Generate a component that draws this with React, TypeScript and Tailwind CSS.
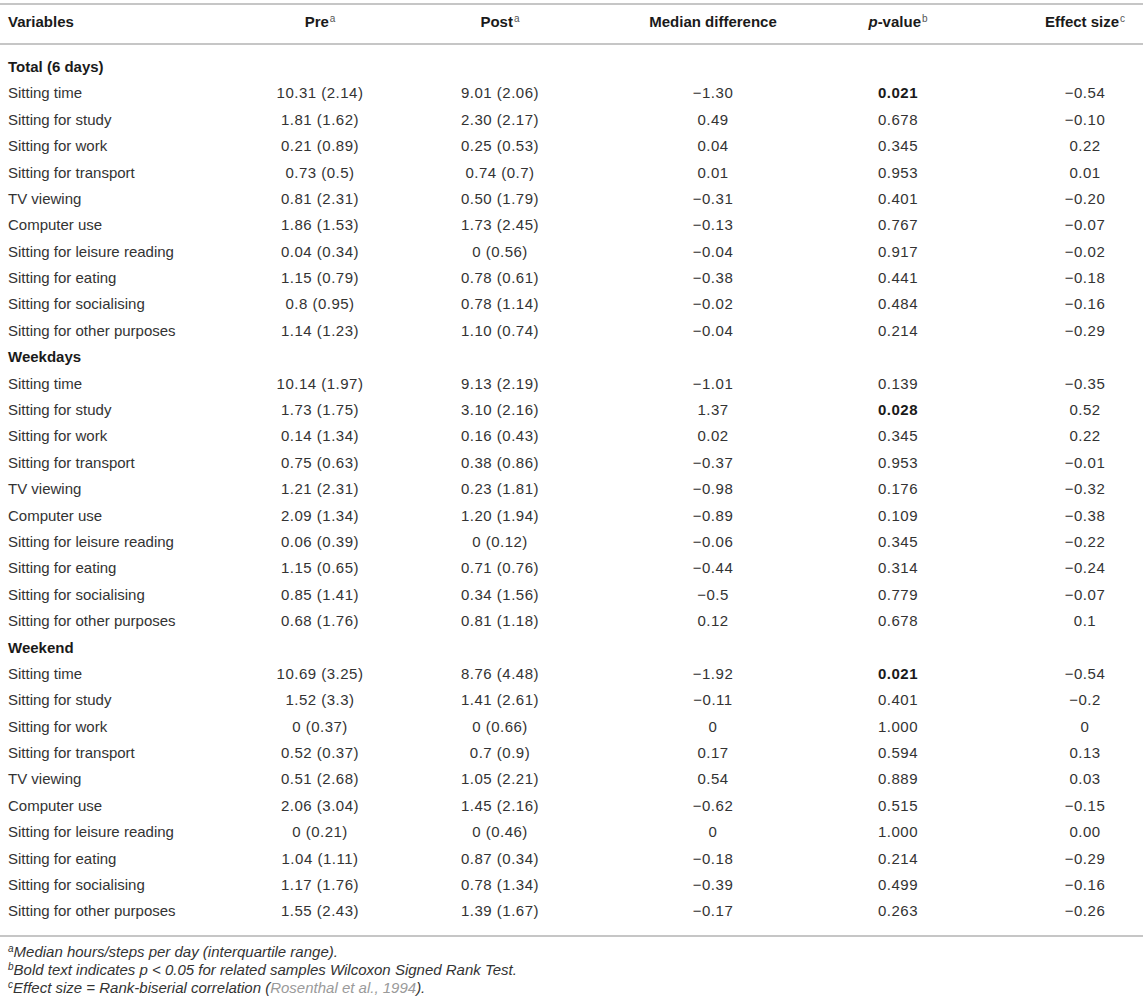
import React from "react";

type Row = [string, string, string, string, string, string, boolean?];

const sections: { title: string; rows: Row[] }[] = [
  {
    title: "Total (6 days)",
    rows: [
      ["Sitting time", "10.31 (2.14)", "9.01 (2.06)", "−1.30", "0.021", "−0.54", true],
      ["Sitting for study", "1.81 (1.62)", "2.30 (2.17)", "0.49", "0.678", "−0.10"],
      ["Sitting for work", "0.21 (0.89)", "0.25 (0.53)", "0.04", "0.345", "0.22"],
      ["Sitting for transport", "0.73 (0.5)", "0.74 (0.7)", "0.01", "0.953", "0.01"],
      ["TV viewing", "0.81 (2.31)", "0.50 (1.79)", "−0.31", "0.401", "−0.20"],
      ["Computer use", "1.86 (1.53)", "1.73 (2.45)", "−0.13", "0.767", "−0.07"],
      ["Sitting for leisure reading", "0.04 (0.34)", "0 (0.56)", "−0.04", "0.917", "−0.02"],
      ["Sitting for eating", "1.15 (0.79)", "0.78 (0.61)", "−0.38", "0.441", "−0.18"],
      ["Sitting for socialising", "0.8 (0.95)", "0.78 (1.14)", "−0.02", "0.484", "−0.16"],
      ["Sitting for other purposes", "1.14 (1.23)", "1.10 (0.74)", "−0.04", "0.214", "−0.29"],
    ],
  },
  {
    title: "Weekdays",
    rows: [
      ["Sitting time", "10.14 (1.97)", "9.13 (2.19)", "−1.01", "0.139", "−0.35"],
      ["Sitting for study", "1.73 (1.75)", "3.10 (2.16)", "1.37", "0.028", "0.52", true],
      ["Sitting for work", "0.14 (1.34)", "0.16 (0.43)", "0.02", "0.345", "0.22"],
      ["Sitting for transport", "0.75 (0.63)", "0.38 (0.86)", "−0.37", "0.953", "−0.01"],
      ["TV viewing", "1.21 (2.31)", "0.23 (1.81)", "−0.98", "0.176", "−0.32"],
      ["Computer use", "2.09 (1.34)", "1.20 (1.94)", "−0.89", "0.109", "−0.38"],
      ["Sitting for leisure reading", "0.06 (0.39)", "0 (0.12)", "−0.06", "0.345", "−0.22"],
      ["Sitting for eating", "1.15 (0.65)", "0.71 (0.76)", "−0.44", "0.314", "−0.24"],
      ["Sitting for socialising", "0.85 (1.41)", "0.34 (1.56)", "−0.5", "0.779", "−0.07"],
      ["Sitting for other purposes", "0.68 (1.76)", "0.81 (1.18)", "0.12", "0.678", "0.1"],
    ],
  },
  {
    title: "Weekend",
    rows: [
      ["Sitting time", "10.69 (3.25)", "8.76 (4.48)", "−1.92", "0.021", "−0.54", true],
      ["Sitting for study", "1.52 (3.3)", "1.41 (2.61)", "−0.11", "0.401", "−0.2"],
      ["Sitting for work", "0 (0.37)", "0 (0.66)", "0", "1.000", "0"],
      ["Sitting for transport", "0.52 (0.37)", "0.7 (0.9)", "0.17", "0.594", "0.13"],
      ["TV viewing", "0.51 (2.68)", "1.05 (2.21)", "0.54", "0.889", "0.03"],
      ["Computer use", "2.06 (3.04)", "1.45 (2.16)", "−0.62", "0.515", "−0.15"],
      ["Sitting for leisure reading", "0 (0.21)", "0 (0.46)", "0", "1.000", "0.00"],
      ["Sitting for eating", "1.04 (1.11)", "0.87 (0.34)", "−0.18", "0.214", "−0.29"],
      ["Sitting for socialising", "1.17 (1.76)", "0.78 (1.34)", "−0.39", "0.499", "−0.16"],
      ["Sitting for other purposes", "1.55 (2.43)", "1.39 (1.67)", "−0.17", "0.263", "−0.26"],
    ],
  },
];

const grid = "grid grid-cols-[230px_180px_180px_246px_191px_116px]";

function Sup({ c }: { c: string }) {
  return <sup className="text-[10px] font-normal text-[#555] ml-[1px]">{c}</sup>;
}

export default function App() {
  return (
    <div
      className="w-[1143px] bg-white text-[#222] pt-[3px]"
      style={{ fontFamily: '"Liberation Sans", Arial, Helvetica, sans-serif' }}
    >
      <div className="border-t-2 border-b-2 border-[#c6c6c6]">
        <div className={`${grid} h-[38px] items-center text-[15px] font-bold text-[#1a1a1a] pb-[3px]`}>
          <div className="pl-[8px]">Variables</div>
          <div className="text-center whitespace-nowrap">
            Pre<Sup c="a" />
          </div>
          <div className="text-center whitespace-nowrap">
            Post<Sup c="a" />
          </div>
          <div className="text-center whitespace-nowrap">Median difference</div>
          <div className="text-center whitespace-nowrap pr-[67px]">
            <span className="italic">p</span>-value<Sup c="b" />
          </div>
          <div className="text-center whitespace-nowrap">
            Effect size<Sup c="c" />
          </div>
        </div>
      </div>
      <div className="border-b-2 border-[#c6c6c6] pt-[9px] pb-[10px] text-[15px]">
        {sections.map((s) => (
          <div key={s.title}>
            <div className="h-[26.4px] flex items-center pl-[8px] font-bold text-[#1a1a1a]">{s.title}</div>
            {s.rows.map((r, i) => (
              <div key={i} className={`${grid} h-[26.4px] items-center text-[#333]`}>
                <div className="pl-[8px] whitespace-nowrap">{r[0]}</div>
                <div className="text-center whitespace-nowrap tracking-[0.5px]">{r[1]}</div>
                <div className="text-center whitespace-nowrap tracking-[0.5px]">{r[2]}</div>
                <div className="text-center whitespace-nowrap tracking-[0.5px]">{r[3]}</div>
                <div
                  className={`text-center whitespace-nowrap tracking-[0.5px] pr-[67px] ${
                    r[6] ? "font-bold text-[#1a1a1a]" : ""
                  }`}
                >
                  {r[4]}
                </div>
                <div className="text-center whitespace-nowrap tracking-[0.5px]">{r[5]}</div>
              </div>
            ))}
          </div>
        ))}
      </div>
      <div className="pt-[6px] pl-[8px] text-[15px] italic text-[#333] leading-[18px]">
        <div>
          <sup className="text-[10px]">a</sup>Median hours/steps per day (interquartile range).
        </div>
        <div>
          <sup className="text-[10px]">b</sup>Bold text indicates p &lt; 0.05 for related samples Wilcoxon Signed Rank Test.
        </div>
        <div>
          <sup className="text-[10px]">c</sup>Effect size = Rank-biserial correlation (
          <span className="text-[#9a9a9a]">Rosenthal et al., 1994</span>).
        </div>
      </div>
    </div>
  );
}
